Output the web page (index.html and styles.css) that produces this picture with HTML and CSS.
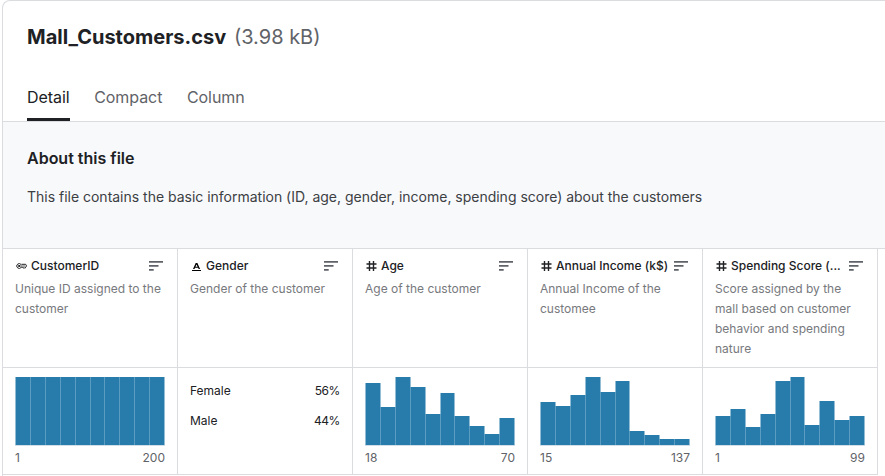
FILE: index.html
```
<!DOCTYPE html>
<html lang="en">
<head>
<meta charset="utf-8">
<title>Mall_Customers.csv</title>
<link rel="stylesheet" href="styles.css">
</head>
<body>
<svg class="defs" width="0" height="0">
  <symbol id="sort" viewBox="0 0 14 10"><path d="M0 0h14v1.7H0zM0 4.1h9.5v1.7H0zM0 8.1h4.7v1.7H0z"/></symbol>
  <symbol id="hash" viewBox="0 0 11 10"><path d="M3.5 0v10M7.5 0v10M0.5 3h10M0.5 7h10" fill="none" stroke="currentColor" stroke-width="1.4"/></symbol>
  <symbol id="key" viewBox="0 0 11 6"><path d="M5.2 1.7A2.4 2.4 0 1 0 5.2 4.3H6.4L7.2 5.2 8 4.4 8.8 5.3 10.5 3 9.7 1.3H5.4" fill="#fff" stroke="#202124" stroke-width="1"/><circle cx="3.1" cy="3" r="1"/><path d="M4 3h5" stroke="#202124" stroke-width=".7"/></symbol>
  <symbol id="text" viewBox="0 0 9 8"><path fill-rule="evenodd" d="M0 7h9v1H0zM3.7 0h1.7L8.1 6H6.6l-.5-1.2H3L2.5 6H1zM4.5 1.6 3.5 3.8h2.1z"/></symbol>
</svg>
<main class="card">
  <header class="head">
    <h1 class="title">Mall_Customers.csv <span class="size">(3.98 kB)</span></h1>
    <nav class="tabs"><a class="tab active">Detail</a><a class="tab">Compact</a><a class="tab">Column</a></nav>
  </header>
  <section class="about">
    <h2>About this file</h2>
    <p>This file contains the basic information (ID, age, gender, income, spending score) about the customers</p>
  </section>
  <section class="grid">
    <div class="cell info"><div class="name"><span class="type"><svg width="11" height="6"><use href="#key"/></svg></span><b>CustomerID</b><svg class="sort" width="14" height="10"><use href="#sort"/></svg></div><p>Unique ID assigned to the customer</p></div>
    <div class="cell info"><div class="name"><span class="type"><svg class="letter" width="9" height="8"><use href="#text"/></svg></span><b>Gender</b><svg class="sort" width="14" height="10"><use href="#sort"/></svg></div><p>Gender of the customer</p></div>
    <div class="cell info"><div class="name"><span class="type"><svg width="11" height="10"><use href="#hash"/></svg></span><b>Age</b><svg class="sort" width="14" height="10"><use href="#sort"/></svg></div><p>Age of the customer</p></div>
    <div class="cell info"><div class="name"><span class="type"><svg width="11" height="10"><use href="#hash"/></svg></span><b>Annual Income (k$)</b><svg class="sort" width="14" height="10"><use href="#sort"/></svg></div><p>Annual Income of the customee</p></div>
    <div class="cell info"><div class="name"><span class="type"><svg width="11" height="10"><use href="#hash"/></svg></span><b>Spending Score (...</b><svg class="sort" width="14" height="10"><use href="#sort"/></svg></div><p>Score assigned by the mall based on customer behavior and spending nature</p></div>
    <div class="rest"></div>

    <div class="cell data">
      <div class="chart"><i style="height:68px"></i><i style="height:68px"></i><i style="height:68px"></i><i style="height:68px"></i><i style="height:68px"></i><i style="height:68px"></i><i style="height:68px"></i><i style="height:68px"></i><i style="height:68px"></i><i style="height:68px"></i></div>
      <div class="range"><span>1</span><span>200</span></div>
    </div>
    <div class="cell data shares">
      <div class="share"><span>Female</span><span class="pct">56%</span></div>
      <div class="share"><span>Male</span><span class="pct">44%</span></div>
    </div>
    <div class="cell data">
      <div class="chart"><i style="height:62px"></i><i style="height:38px"></i><i style="height:68px"></i><i style="height:58px"></i><i style="height:31px"></i><i style="height:52px"></i><i style="height:29px"></i><i style="height:19px"></i><i style="height:11px"></i><i style="height:27px"></i></div>
      <div class="range"><span>18</span><span>70</span></div>
    </div>
    <div class="cell data">
      <div class="chart"><i style="height:43px"></i><i style="height:39px"></i><i style="height:50px"></i><i style="height:68px"></i><i style="height:53px"></i><i style="height:64px"></i><i style="height:14px"></i><i style="height:10px"></i><i style="height:6px"></i><i style="height:6px"></i></div>
      <div class="range"><span>15</span><span>137</span></div>
    </div>
    <div class="cell data">
      <div class="chart"><i style="height:29px"></i><i style="height:36px"></i><i style="height:18px"></i><i style="height:31px"></i><i style="height:64px"></i><i style="height:68px"></i><i style="height:20px"></i><i style="height:44px"></i><i style="height:25px"></i><i style="height:29px"></i></div>
      <div class="range"><span>1</span><span>99</span></div>
    </div>
    <div class="rest"></div>
  </section>
</main>
</body>
</html>
```
FILE: styles.css
```
* { box-sizing: border-box; }
body { margin: 0; background: #fff; color: #202124; font-family: Inter, sans-serif; }
h1, h2, p { margin: 0; }
.defs { display: block; }
.card { height: 476px; margin-left: 2px; border: 1px solid #dadce0; border-width: 1px 0 0 1px; border-radius: 8px 0 0 0; }
.head { display: flex; flex-direction: column; justify-content: space-between; height: 121px; padding: 22px 24px 0; border-bottom: 1px solid #dadce0; }
.title { font-size: 20px; line-height: 28px; font-weight: 700; white-space: nowrap; }
.size { margin-left: 3px; font-weight: 400; color: #5f6368; }
.tabs { display: flex; gap: 24.5px; }
.tab { height: 36px; font-size: 16px; line-height: 24px; letter-spacing: -0.05px; color: #5f6368; }
.tab.active { color: #202124; border-bottom: 3px solid #202124; border-radius: 2px 2px 0 0; }
.about { height: 126px; padding: 24px 24px 0; background: #f8f9fb; }
.about h2 { font-size: 16px; line-height: 24px; font-weight: 600; }
.about p { margin-top: 17px; font-size: 14px; line-height: 20px; letter-spacing: -0.01px; color: #3c4043; }
.grid { display: grid; grid-template-columns: repeat(5, 175px) 1fr; grid-template-rows: 119px 107px; border-top: 1px solid #dadce0; }
.cell { min-width: 0; border-right: 1px solid #dadce0; border-bottom: 1px solid #dadce0; padding: 0 12px; }
.info { padding-top: 7px; }
.name { display: flex; align-items: center; height: 20px; font-size: 12px; }
.name b { padding-bottom: 2px; font-weight: 500; white-space: nowrap; }
.type { display: flex; flex: none; width: 11px; justify-content: center; margin: 0 4px 0 1px; }
.letter { margin-top: 1px; }
.sort { flex: none; margin-left: auto; margin-right: 2px; fill: #5f6368; }
.info p { width: 150px; margin-top: 3px; font-size: 12px; line-height: 20px; color: #77797d; }
.data { padding-top: 9px; }
.chart { display: flex; align-items: flex-end; height: 69px; border-bottom: 1px solid #d3dfe8; }
.chart i { flex: none; width: 16px; margin-right: -1px; border: solid rgba(38, 124, 171, .5); border-width: 0 1px; background: #277cab; background-clip: padding-box; }
.chart i:nth-child(6) { width: 15px; }
.range { display: flex; justify-content: space-between; margin-top: 3px; font-size: 12px; line-height: 18px; color: #5f6368; }
.shares { padding-top: 13px; }
.share { display: flex; justify-content: space-between; margin-bottom: 10px; font-size: 12px; line-height: 20px; }
.pct { letter-spacing: -0.4px; }
```
